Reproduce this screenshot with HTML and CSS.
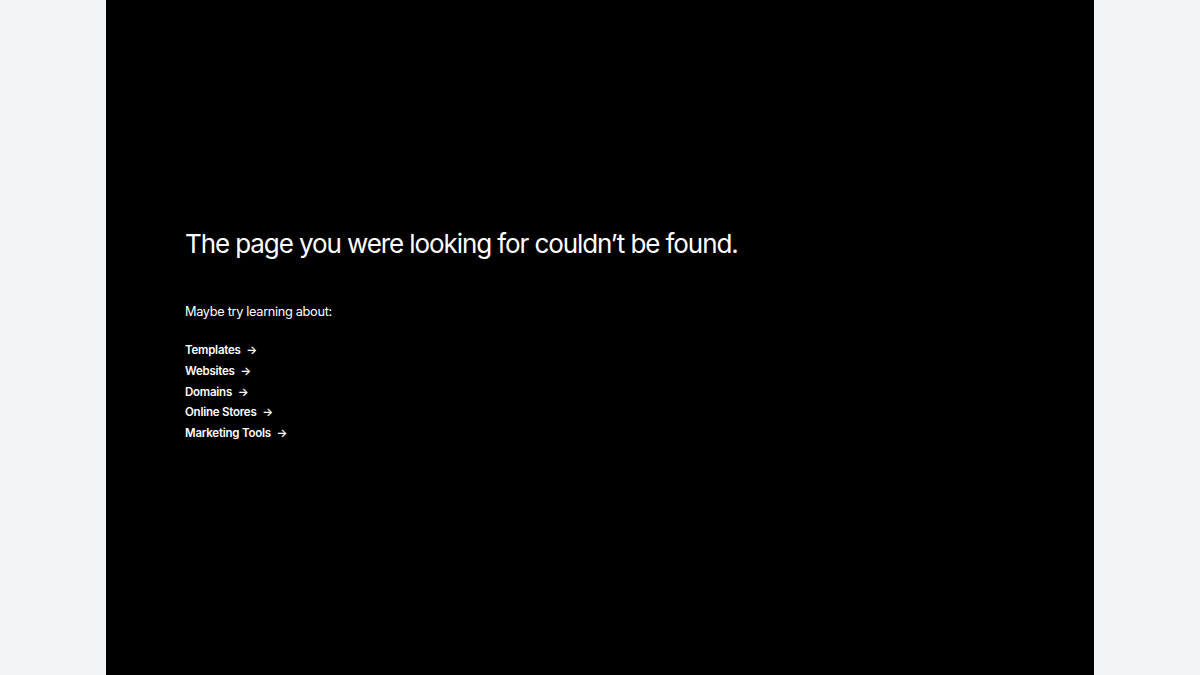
FILE: index.html
```html
<!DOCTYPE html>
<html>
<head>
<meta charset="utf-8">
<link rel="stylesheet" href="styles.css">
</head>
<body>
<main class="panel">
  <div class="content">
    <h1 class="title">The page you were looking for couldn’t be found.</h1>
    <p class="lead">Maybe try learning about:</p>
    <ul class="links">
      <li><a href="#">Templates <span class="arrow">→</span></a></li>
      <li><a href="#">Websites <span class="arrow">→</span></a></li>
      <li><a href="#">Domains <span class="arrow">→</span></a></li>
      <li><a href="#">Online Stores <span class="arrow">→</span></a></li>
      <li><a href="#">Marketing Tools <span class="arrow">→</span></a></li>
    </ul>
  </div>
</main>
</body>
</html>
```
FILE: styles.css
```css
html, body {
  margin: 0;
  height: 100%;
}
body {
  background: #f3f4f8;
  display: flex;
  justify-content: center;
  font-family: Inter, "Liberation Sans", sans-serif;
}
.panel {
  width: 988px;
  height: 675px;
  background: #000;
  color: #fff;
  display: flex;
  align-items: flex-start;
}
.content {
  padding: 228px 0 0 79px;
}
.title {
  margin: 0;
  font-size: 26px;
  font-weight: 400;
  letter-spacing: -0.042em;
  line-height: 32px;
}
.lead {
  margin: 44px 0 0;
  font-size: 12.75px;
  letter-spacing: -0.025em;
  line-height: 16px;
}
.links {
  list-style: none;
  margin: 18px 0 0;
  padding: 0;
}
.links li {
  height: 20.75px;
  line-height: 20.75px;
}
.links a {
  color: #fff;
  text-decoration: none;
  font-size: 11.5px;
  font-weight: 600;
  letter-spacing: -0.02em;
}
.arrow {
  margin-left: 3px;
  font-family: Inter, sans-serif;
}
```
